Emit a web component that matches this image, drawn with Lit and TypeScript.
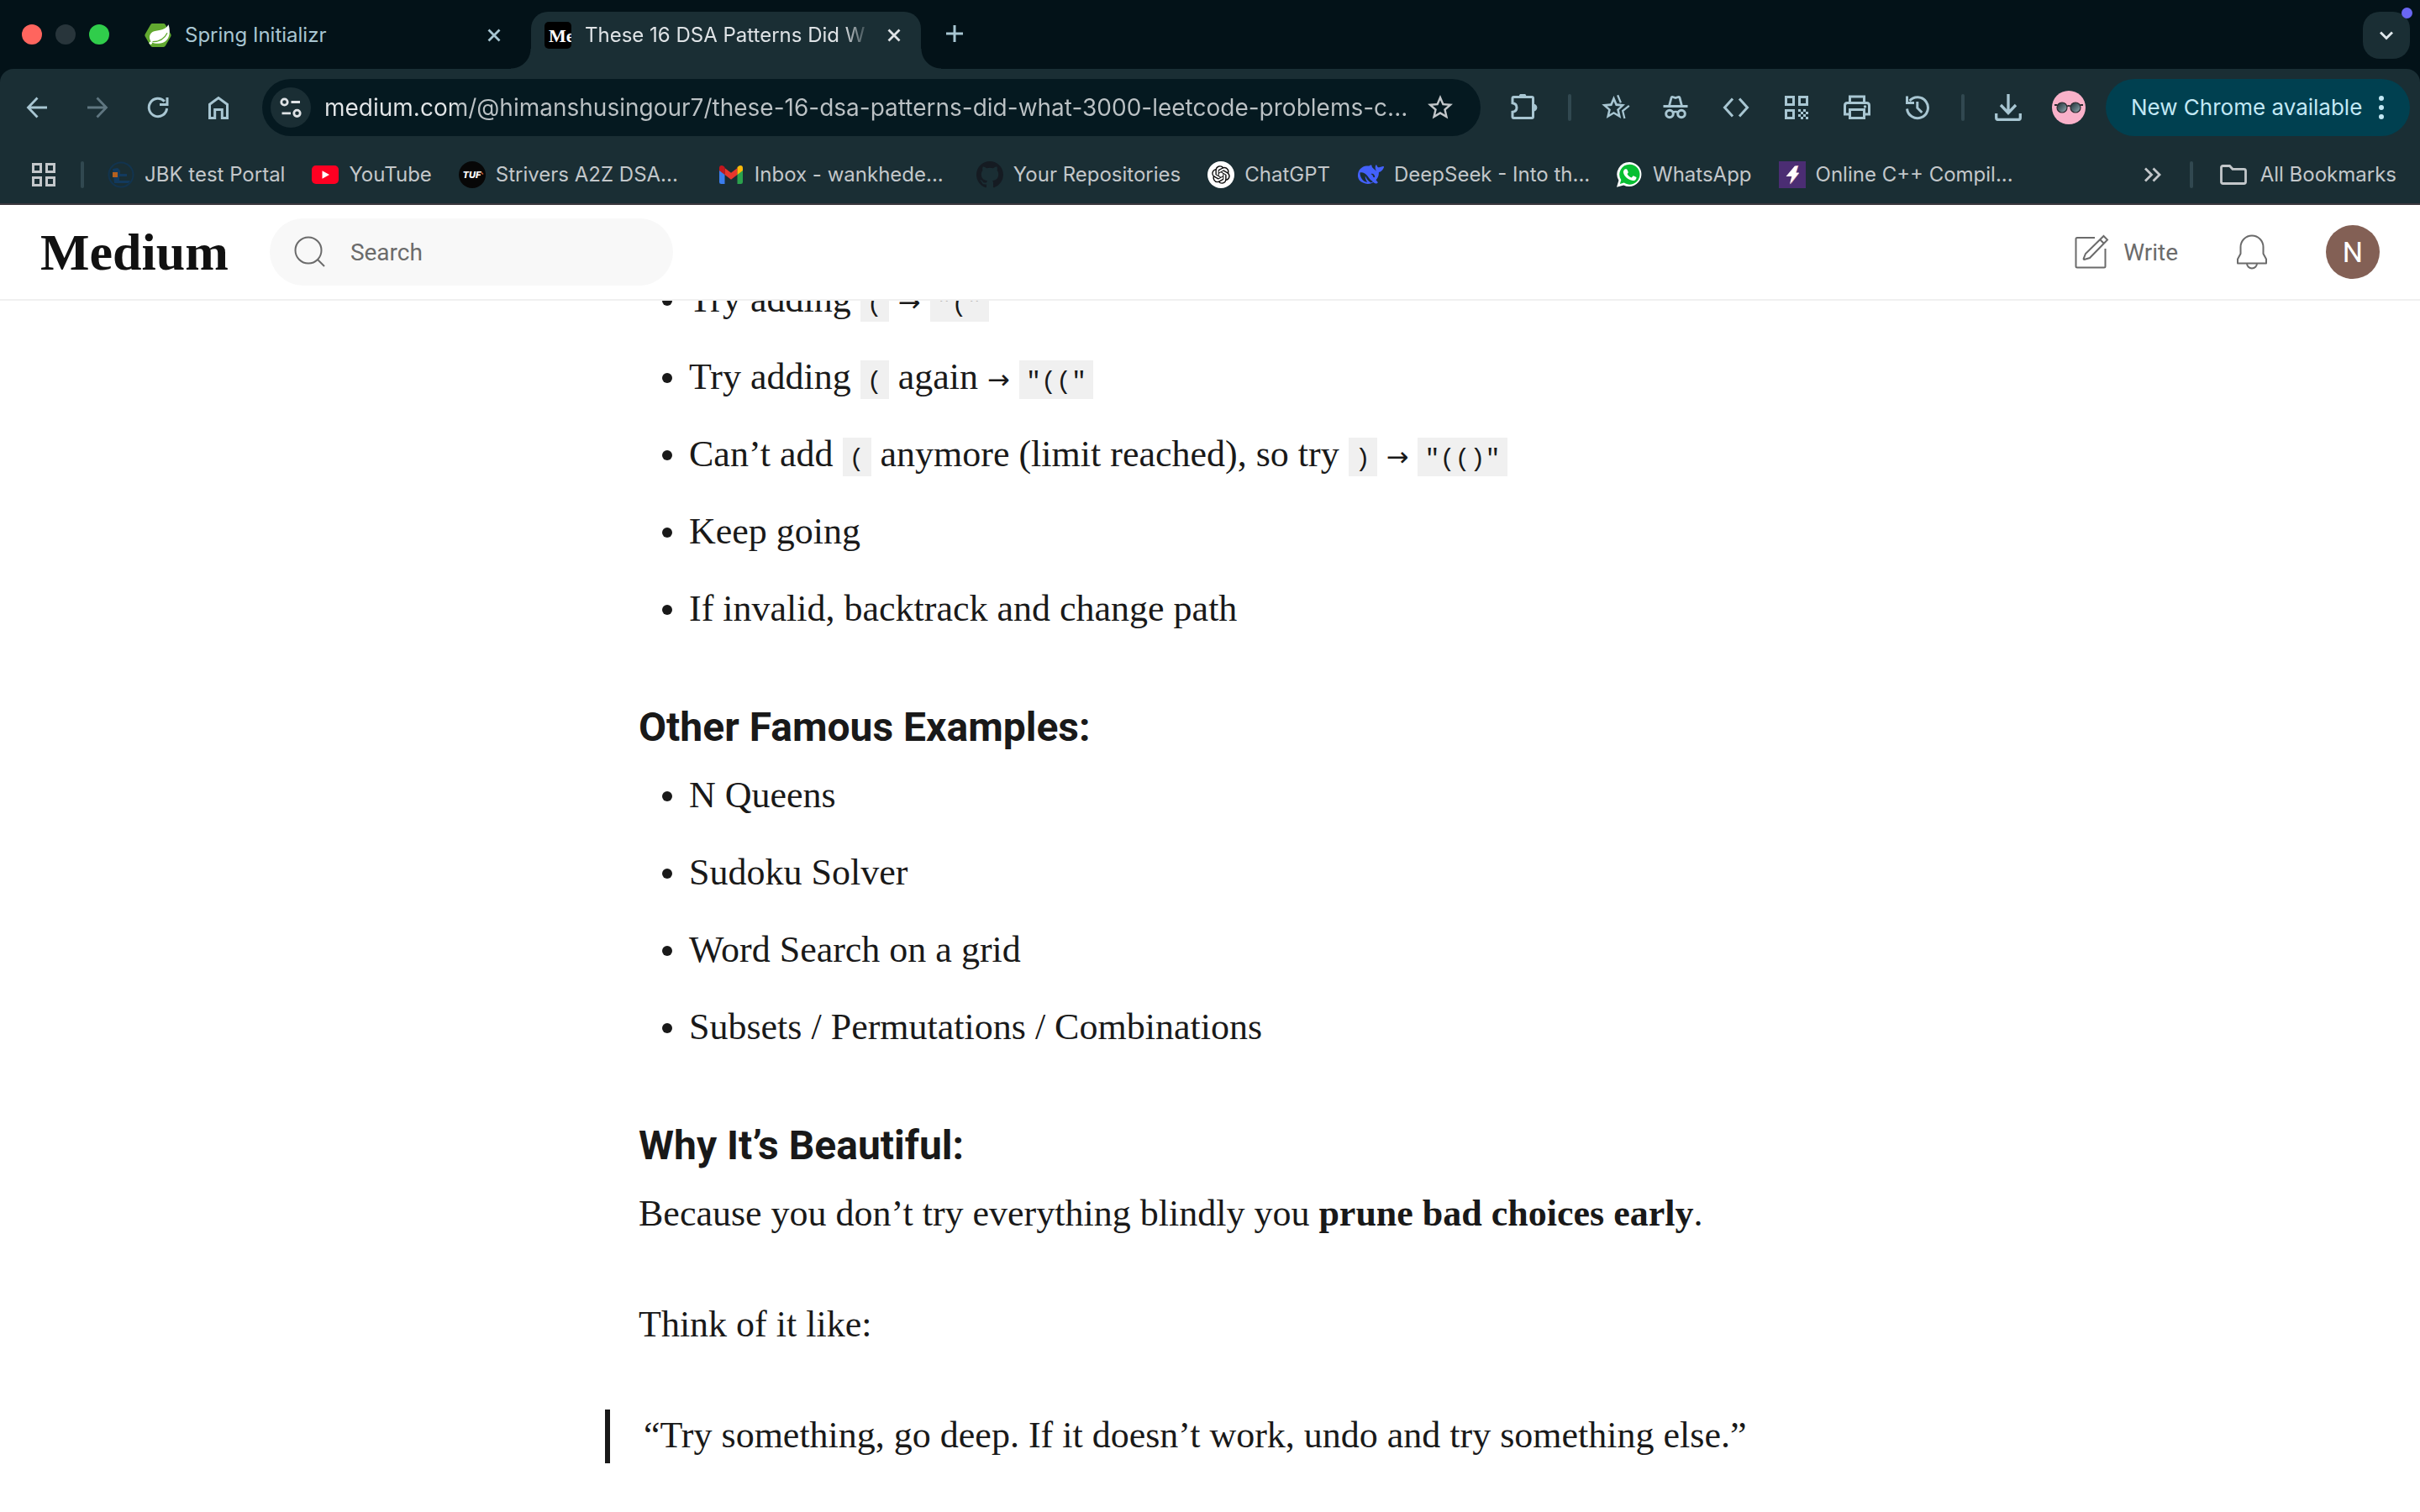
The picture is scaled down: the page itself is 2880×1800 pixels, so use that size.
import { LitElement, html, svg, css } from "lit";
import type { TemplateResult } from "lit";
import { customElement } from "lit/decorators.js";
import { classMap } from "lit/directives/class-map.js";

/* ---------- icons ---------- */

const icon = (size: number, body: TemplateResult, view = 32) => html`
  <svg class="icon" width=${size} height=${size} viewBox="0 0 ${view} ${view}" aria-hidden="true">${body}</svg>
`;

const line = (d: string, w = 3) =>
  svg`<path d=${d} fill="none" stroke="currentColor" stroke-width=${w} />`;

const closeIcon = icon(16, line("M1.5 1.5 14.5 14.5M14.5 1.5 1.5 14.5", 2.8), 16);
const plusIcon = icon(20, line("M10 0V20M0 10H20", 3), 20);
const chevronDown = icon(16, line("M1 4.5 8 11.5 15 4.5", 3), 16);

const backIcon = icon(32, line("M28 16H6M16.5 4.5 5.5 16l11 11.5", 2.8));
const forwardIcon = icon(32, line("M4 16H26M15.5 4.5 26.5 16l-11 11.5", 2.8));
const reloadIcon = icon(32, line("M26.6 17A10.7 10.7 0 1 1 23.8 8.7M27 4V12.5H18", 3));
const homeIcon = icon(32, line("M5.5 28.5V12.2L16 4.5 26.5 12.2v16.3h-6.2V18.5h-8.6v10z", 3));
const tuneIcon = icon(
  32,
  svg`<circle cx="8.5" cy="9.5" r="3.7" fill="none" stroke="currentColor" stroke-width="2.8" />
    <circle cx="23.5" cy="22.8" r="3.7" fill="none" stroke="currentColor" stroke-width="2.8" />
    ${line("M16.5 9.5H27M5.5 22.8H16", 2.8)}`,
);
const starIcon = icon(
  36,
  svg`<path fill="currentColor" d="M22 9.24l-7.19-.62L12 2 9.19 8.63 2 9.24l5.46 4.73L5.82 21 12 17.27 18.18 21l-1.63-7.03L22 9.24zM12 15.4l-3.76 2.27 1-4.28-3.32-2.88 4.38-.38L12 6.1l1.71 4.04 4.38.38-3.32 2.88 1 4.28L12 15.4z" />`,
  24,
);
const puzzleIcon = icon(
  32,
  svg`${line("M3.5 3.5H25q1.5 0 1.5 1.5V27q0 1.5-1.5 1.5H3.5q-1.5 0-1.5-1.5V21.3c3-.4 5-2.6 5-5.3s-2-4.9-5-5.3V5q0-1.5 1.5-1.5z", 3)}
    <path fill="currentColor" d="M9.8 3a4.3 4.3 0 0 1 8.6 0zM27 11.7a4.4 4.4 0 0 1 0 8.8z" />`,
);
const sparkStarIcon = icon(
  36,
  svg`<path fill="currentColor" d="M20 9.5l-6.4-.6L11 2.6 8.4 8.9 1.5 9.5 6.7 14 5.2 20.7 11 17.2 16.8 20.7 15.3 14zM11 15.3l-3.3 2 .9-3.8-2.9-2.5 3.8-.3L11 7.1l1.5 3.6 3.8.3-2.9 2.5.9 3.8z" />
    <path fill="none" stroke="currentColor" stroke-width="1.5" d="M14.1 2.2 16.6 8.2M23.2 10.6 18.1 14.7 19.6 20.7" />`,
  24,
);
const incognitoIcon = icon(
  32,
  svg`${line("M1.5 14.5H30.5", 3)}
    ${line("M8.5 14 11 4.5q.4-1.4 1.8-1l3.2 1 3.2-1q1.4-.4 1.8 1L23.5 14", 2.8)}
    <circle cx="9" cy="23.5" r="4.3" fill="none" stroke="currentColor" stroke-width="3" />
    <circle cx="23" cy="23.5" r="4.3" fill="none" stroke="currentColor" stroke-width="3" />
    ${line("M12.5 22q3.5-2 7 0", 2.6)}`,
);
const codeIcon = icon(32, line("M12 5.5 2.5 16 12 26.5M20 5.5 29.5 16 20 26.5", 3));
const qrIcon = icon(
  32,
  svg`${line("M3.5 3.5h9v9h-9zM19.5 3.5h9v9h-9zM3.5 19.5h9v9h-9z", 3)}
    <path fill="currentColor" d="M18 18h3v3h-3zM24 18h3v3h-3zM21 21h3v3h-3zM27 21h3v3h-3zM18 24h3v3h-3zM24 24h3v3h-3zM21 27h3v3h-3zM27 27h3v3h-3z" />`,
);
const printIcon = icon(
  32,
  svg`${line("M7.5 10V3h17v7M7.5 24H1.5V13.5q0-3 3-3h23q3 0 3 3V24h-6M7.5 18.5h17v10h-17z", 3)}
    <circle cx="25.5" cy="15" r="1.7" fill="currentColor" />`,
);
const historyIcon = icon(32, line("M3.5 17.5A12.5 12.5 0 1 0 6.5 8M3.5 2.5V10.5H12M15.8 9v7.5l5.5 5.5", 3));
const downloadIcon = icon(32, line("M16 0V22M7 13l9 9.5 9-9.5M1.7 23v5q0 2.5 2.5 2.5h23.6q2.5 0 2.5-2.5v-5", 3.3));
const shadesIcon = icon(
  40,
  svg`<defs>
      <linearGradient id="lens" x1="0" y1="0" x2="1" y2="1">
        <stop offset="0" stop-color="#1d2a30" /><stop offset="0.6" stop-color="#61777f" /><stop offset="1" stop-color="#a3b5b9" />
      </linearGradient>
    </defs>
    <circle cx="20" cy="20" r="20" fill="#f9b1c9" />
    <circle cx="12" cy="20" r="6" fill="url(#lens)" stroke="#2b2b30" stroke-width="1.2" />
    <circle cx="28" cy="20" r="6" fill="url(#lens)" stroke="#2b2b30" stroke-width="1.2" />
    <path d="M3 17h3.5M33.5 17H37M18 18.5q2-1.2 4 0" fill="none" stroke="#2b2b30" stroke-width="1.8" />`,
  40,
);
const dotsIcon = icon(
  32,
  svg`<circle cx="16" cy="5" r="3" fill="currentColor" /><circle cx="16" cy="16" r="3" fill="currentColor" /><circle cx="16" cy="27" r="3" fill="currentColor" />`,
);
const appsIcon = icon(32, line("M3.5 3.5h9v9h-9zM19.5 3.5h9v9h-9zM3.5 19.5h9v9h-9zM19.5 19.5h9v9h-9z", 3));
const moreIcon = icon(32, line("M7 8.5 14.5 16 7 23.5M16.5 8.5 24 16l-7.5 7.5", 2.8));
const folderIcon = icon(32, line("M3.5 5.5H11.5L15 9.3H28.5q2 0 2 2V24.5q0 2-2 2H3.5q-2 0-2-2v-17q0-2 2-2z", 2.8));

/* ---------- favicons ---------- */

const springLogo = icon(
  32,
  svg`<path fill="#62a930" d="M9.5 2h13q1.6 0 2.4 1.4l6.3 11q.9 1.6 0 3.2l-6.3 11q-.8 1.4-2.4 1.4h-13q-1.6 0-2.4-1.4l-6.3-11q-.9-1.6 0-3.2l6.3-11Q7.9 2 9.5 2z" />
    <path fill="#fff" d="M28.5 3.2c3 8.5 1.7 22-11.5 22.5-3.5.2-6-.3-8.5-1.2C5 20.5 5 15 9.5 12c4.5-2.8 14.5-.5 19-8.8z" />
    <circle cx="7.3" cy="25.3" r="1.7" fill="#fff" />
    <path d="M9.5 23.7c8.5-.2 14.5-4 17.5-10.5" fill="none" stroke="#62a930" stroke-width="1.3" />`,
);
const mediumFavicon = icon(
  32,
  svg`<rect width="32" height="32" rx="5" fill="#000" />
    <text x="5" y="24" font-family="Liberation Serif, serif" font-weight="700" font-size="22" fill="#fff">Me</text>`,
);
const jbkLogo = icon(
  32,
  svg`<circle cx="16" cy="16" r="14.5" fill="none" stroke="#12344f" stroke-width="2" />
    <path fill="#123a5e" d="M6 9l6-1 3 3v4h8v3H14v5h13l-2 3H8z" />
    <rect x="6" y="13" width="6" height="6" fill="#b5611f" />`,
);
const youtubeLogo = icon(
  32,
  svg`<rect y="5" width="32" height="22" rx="5" fill="#ff0022" /><path fill="#fff" d="M12.5 11.2 21 16l-8.5 4.8z" />`,
);
const tufLogo = icon(
  32,
  svg`<circle cx="16" cy="16" r="16" fill="#070707" />
    <text x="15.5" y="20" text-anchor="middle" font-family="Inter, sans-serif" font-weight="800" font-style="italic" font-size="11" fill="#fff">TUF</text>
    <path d="M27 13.5l2 2" stroke="#d4582a" stroke-width="1.5" />`,
);
const gmailLogo = icon(
  32,
  svg`<path fill="#3b7ded" d="M2 10.5v14.2Q2 27 4.3 27H8.5V15z" />
    <path fill="#2ba24c" d="M30 10.5v14.2q0 2.3-2.3 2.3H23.5V15z" />
    <path fill="#e8362c" d="M8.5 8 16 13.8 23.5 8v8L16 21.8 8.5 16z" />
    <path fill="#c5161d" d="M2 8.3Q2 5 4.8 5q1.4 0 2.5.9L8.5 7v9L2 11z" />
    <path fill="#fbba0a" d="M30 8.3Q30 5 27.2 5q-1.4 0-2.5.9L23.5 7v9L30 11z" />`,
);
const githubLogo = icon(
  32,
  svg`<path fill="#151b22" d="M8 0C3.58 0 0 3.58 0 8c0 3.54 2.29 6.53 5.47 7.59.4.07.55-.17.55-.38 0-.19-.01-.82-.01-1.49-2.01.37-2.53-.49-2.69-.94-.09-.23-.48-.94-.82-1.13-.28-.15-.68-.52-.01-.53.63-.01 1.08.58 1.23.82.72 1.21 1.87.87 2.33.66.07-.52.28-.87.51-1.07-1.78-.2-3.64-.89-3.64-3.95 0-.87.31-1.59.82-2.15-.08-.2-.36-1.02.08-2.12 0 0 .67-.21 2.2.82.64-.18 1.32-.27 2-.27.68 0 1.36.09 2 .27 1.53-1.04 2.2-.82 2.2-.82.44 1.1.16 1.92.08 2.12.51.56.82 1.27.82 2.15 0 3.07-1.87 3.75-3.65 3.95.29.25.54.73.54 1.48 0 1.07-.01 1.93-.01 2.2 0 .21.15.46.55.38A8.013 8.013 0 0016 8c0-4.42-3.58-8-8-8z" />`,
  16,
);
const chatgptLogo = icon(
  32,
  svg`<circle cx="16" cy="16" r="16" fill="#fff" />
    <g transform="translate(5.2 5.2) scale(0.9)"><path fill="#0d0d0d" d="M22.2819 9.8211a5.9847 5.9847 0 0 0-.5157-4.9108 6.0462 6.0462 0 0 0-6.5098-2.9A6.0651 6.0651 0 0 0 4.9807 4.1818a5.9847 5.9847 0 0 0-3.9977 2.9 6.0462 6.0462 0 0 0 .7427 7.0966 5.98 5.98 0 0 0 .511 4.9107 6.051 6.051 0 0 0 6.5146 2.9001A5.9847 5.9847 0 0 0 13.2599 24a6.0557 6.0557 0 0 0 5.7718-4.2058 5.9894 5.9894 0 0 0 3.9977-2.9001 6.0557 6.0557 0 0 0-.7475-7.0729zm-9.022 12.6081a4.4755 4.4755 0 0 1-2.8764-1.0408l.1419-.0804 4.7783-2.7582a.7948.7948 0 0 0 .3927-.6813v-6.7369l2.02 1.1686a.071.071 0 0 1 .038.0615v5.5826a4.504 4.504 0 0 1-4.4945 4.4944zm-9.6607-4.1254a4.4708 4.4708 0 0 1-.5346-3.0137l.142.0852 4.783 2.7582a.7712.7712 0 0 0 .7806 0l5.8428-3.3685v2.3324a.0804.0804 0 0 1-.0332.0615L9.74 19.9502a4.4992 4.4992 0 0 1-6.1408-1.6464zM2.3408 7.8956a4.485 4.485 0 0 1 2.3655-1.9728V11.6a.7664.7664 0 0 0 .3879.6765l5.8144 3.3543-2.0201 1.1685a.0757.0757 0 0 1-.071 0l-4.8303-2.7865A4.504 4.504 0 0 1 2.3408 7.872zm16.5963 3.8558L13.1038 8.364 15.1192 7.2a.0757.0757 0 0 1 .071 0l4.8303 2.7913a4.4944 4.4944 0 0 1-.6765 8.1042v-5.6772a.79.79 0 0 0-.407-.667zm2.0107-3.0231l-.142-.0852-4.7735-2.7818a.7759.7759 0 0 0-.7854 0L9.409 9.2297V6.8974a.0662.0662 0 0 1 .0284-.0615l4.8303-2.7866a4.4992 4.4992 0 0 1 6.6802 4.66zM8.3065 12.863l-2.02-1.1638a.0804.0804 0 0 1-.038-.0567V6.0742a4.4992 4.4992 0 0 1 7.3757-3.4537l-.142.0805L8.704 5.459a.7948.7948 0 0 0-.3927.6813zm1.0976-2.3654l2.602-1.4998 2.6069 1.4998v2.9994l-2.5974 1.4997-2.6067-1.4997Z" /></g>`,
);
const deepseekLogo = icon(
  32,
  svg`<path fill="#4361fc" d="M1 18C.5 11 5 6 11.5 5.5c2 0 2.6.4 4-.7 1-.7 2.3-.3 2.1.6-.3 1.6 1 2.600 2.9 4.1l2.500 2.300c-.9-2.400-1.900-3.600-.9-6.800.4-1.100 1.300-.7 1.600.2.6 1.900 1.600 2.300 3.300 1.800 2-.1 2.600-1.200 4.400-.9.8.1.8.9.2 1.900-1 2.400-3.200 4.600-5.700 5 .2 3.700-1.100 6.700-3.400 9.300l2 2.400c.5.9-.2 1.500-1.400 1.700-1.400.3-2.500-.2-3.700-1.300-3.300 2.200-8.300 2.600-12.300.5C3.400 23.900 1.300 21.300 1 18z" />
    <path fill="#1a2e34" d="M3.5 13.5c3.5-.7 7 1.500 9.300 4.600 2 2.700 3.700 5 6.200 6.200l-2.500 1.200c-3.700-2-5.500-5.300-6.700-8-.3 2.700.8 5 2.500 7.500-5.500-.5-9-6.300-8.800-11.500zM16.500 15.200c2-1.400 4.800.6 4.700 3.600-.8.8-2 .4-2.200-.7-.3-1.600-1-2.300-2.500-2.900z" />`,
);
const whatsappLogo = icon(
  32,
  svg`<path fill="#fff" d="M16.5 1A14.5 14.5 0 1 1 9.3 28.4L1 30.8l2.4-8A14.5 14.5 0 0 1 16.5 1z" />
    <path fill="#08bf33" d="M16.5 3.7A12 12 0 1 1 9.7 25.6L4.800 27l1.500-4.700A12 12 0 0 1 16.5 3.7z" />
    <path fill="#fff" d="M11.2 9.2h1.3c.5 0 .8.2 1 .7l1.200 2.800c.2.5 0 .9-1.200 2.200 1.100 2.200 2.900 3.700 5.100 4.700l1.700-1.900c.3-.4.6-.4 1-.2l2.700 1.300c.4.2.6.4.5.9-.2 2.100-2.200 3.600-4.300 3.400-5.700-.9-10.700-5.500-11.300-10.100 0-1.700.9-3.300 2.300-3.800z" />`,
);
const boltLogo = icon(
  32,
  svg`<rect width="32" height="32" fill="#4b2d73" />
    <path fill="#f3a6a0" d="M20.5 5.5 23.5 5l-2.8 9h3.7L14 27.5z" />
    <path fill="#fff" d="M19 5.5h3.5L20 13.5h4L12.8 27.5l2.5-9.5H8.5z" />`,
);

/* ---------- browser frame ---------- */

interface Bookmark {
  title: string;
  logo: TemplateResult;
  wide?: boolean;
}

const bookmarks: Bookmark[] = [
  { title: "JBK test Portal", logo: jbkLogo },
  { title: "YouTube", logo: youtubeLogo },
  { title: "Strivers A2Z DSA...", logo: tufLogo, wide: true },
  { title: "Inbox - wankhede...", logo: gmailLogo, wide: true },
  { title: "Your Repositories", logo: githubLogo },
  { title: "ChatGPT", logo: chatgptLogo },
  { title: "DeepSeek - Into th...", logo: deepseekLogo, wide: true },
  { title: "WhatsApp", logo: whatsappLogo },
  { title: "Online C++ Compil...", logo: boltLogo },
];

const navButtons = [
  { label: "Back", glyph: backIcon },
  { label: "Forward", glyph: forwardIcon, off: true },
  { label: "Reload", glyph: reloadIcon },
  { label: "Home", glyph: homeIcon },
];

const toolButtons = [
  { label: "Bookmark actions", glyph: sparkStarIcon },
  { label: "Incognito window", glyph: incognitoIcon },
  { label: "Developer tools", glyph: codeIcon },
  { label: "QR code", glyph: qrIcon },
  { label: "Print", glyph: printIcon },
  { label: "History", glyph: historyIcon },
];

const resets = css`
  * {
    box-sizing: border-box;
  }
  button {
    margin: 0;
    padding: 0;
    border: 0;
    background: none;
    color: inherit;
    font: inherit;
    cursor: pointer;
  }
  a {
    color: inherit;
    text-decoration: none;
  }
  .icon {
    display: block;
    flex: none;
  }
`;

@customElement("browser-frame")
class BrowserFrame extends LitElement {
  static styles = [
    resets,
    css`
      :host {
        display: block;
        background: #031218;
        color: #c3c7ca;
        font-family: Inter, "Liberation Sans", sans-serif;
        font-size: 24px;
        line-height: 32px;
      }
      .strip {
        display: flex;
        align-items: flex-end;
        height: 82px;
        padding: 0 12px 0 26px;
      }
      .lights {
        display: flex;
        align-items: center;
        align-self: stretch;
        gap: 16px;
        margin-right: 26px;
      }
      .light {
        width: 24px;
        height: 24px;
        border-radius: 50%;
        background: #28353b;
      }
      .light.close {
        background: #ff655e;
      }
      .light.zoom {
        background: #30cd4b;
      }
      .tab {
        position: relative;
        display: flex;
        align-items: center;
        gap: 16px;
        flex: 0 1 464px;
        min-width: 0;
        height: 68px;
        padding: 0 24px 12px 16px;
        color: #a8c6d2;
      }
      .tab + .tab {
        margin-left: 12px;
      }
      .tab.active {
        background: #1a2e34;
        border-radius: 20px 20px 0 0;
        color: #dfe3e6;
      }
      .tab.active::before,
      .tab.active::after {
        content: "";
        position: absolute;
        bottom: 0;
        width: 24px;
        height: 24px;
      }
      .tab.active::before {
        right: 100%;
        background: radial-gradient(circle at 0 0, transparent 23px, #1a2e34 24px);
      }
      .tab.active::after {
        left: 100%;
        background: radial-gradient(circle at 100% 0, transparent 23px, #1a2e34 24px);
      }
      .name {
        flex: 1;
        min-width: 0;
        overflow: hidden;
        white-space: nowrap;
      }
      .active .name {
        -webkit-mask-image: linear-gradient(to left, transparent 4px, #000 36px);
        mask-image: linear-gradient(to left, transparent 4px, #000 36px);
      }
      .add {
        display: grid;
        place-items: center;
        width: 40px;
        height: 40px;
        margin: 0 auto 22px 20px;
        color: #a8c6d2;
      }
      .search-tabs {
        position: relative;
        display: grid;
        place-items: center;
        width: 56px;
        height: 56px;
        margin-bottom: 12px;
        border-radius: 20px;
        background: #1a2e34;
        color: #dfe8ec;
      }
      .badge {
        position: absolute;
        top: -5px;
        right: -3px;
        width: 13px;
        height: 13px;
        border-radius: 50%;
        background: #6a66f2;
      }
      .bars {
        background: #1a2e34;
        border-radius: 16px 16px 0 0;
        border-bottom: 2px solid #3b383d;
      }
      .toolbar {
        display: flex;
        align-items: center;
        padding: 12px 12px 12px 8px;
        color: #a8c6d2;
      }
      .tool {
        display: grid;
        place-items: center;
        width: 72px;
        height: 56px;
      }
      .tool.off {
        color: #5f7680;
      }
      .rule {
        flex: none;
        width: 4px;
        height: 32px;
        margin: 0 16px;
        border-radius: 2px;
        background: #314850;
      }
      .address {
        display: flex;
        align-items: center;
        flex: 1;
        height: 68px;
        margin: 0 16px;
        padding: 0 30px 0 10px;
        border-radius: 34px;
        background: #051920;
        color: #c3c7ca;
      }
      .site {
        display: grid;
        place-items: center;
        width: 48px;
        height: 48px;
        margin-right: 16px;
        border-radius: 50%;
        background: #1a2e34;
        color: #dfe3e6;
      }
      .url {
        flex: 1;
        min-width: 0;
        height: 48px;
        padding: 0;
        border: 0;
        outline: 0;
        background: linear-gradient(to right, #e3e6e8 158px, #bcc2c5 158px) text;
        color: transparent;
        font: inherit;
        font-size: 28px;
      }
      .update {
        display: flex;
        align-items: center;
        justify-content: space-between;
        min-width: 362px;
        height: 68px;
        margin-left: 8px;
        padding: 0 18px 0 30px;
        border-radius: 34px;
        background: #004050;
        color: #c2e8f5;
        font-size: 26px;
      }
      .bookmarks {
        display: flex;
        align-items: center;
        height: 68px;
        padding: 0 28px 0 36px;
      }
      .bookmarks .rule {
        margin: 0 28px;
      }
      .marks {
        display: flex;
        align-items: center;
        flex: 1;
        min-width: 0;
        gap: 32px;
      }
      .mark {
        display: flex;
        align-items: center;
        gap: 12px;
        white-space: nowrap;
      }
      .mark.wide {
        width: 276px;
      }
      .folder {
        display: flex;
        align-items: center;
        gap: 16px;
        margin-left: 4px;
      }
    `,
  ];

  render() {
    return html`
      <div class="strip">
        <div class="lights">
          <span class="light close"></span><span class="light"></span><span class="light zoom"></span>
        </div>
        <div class="tab">
          ${springLogo}<span class="name">Spring Initializr</span>
          <button aria-label="Close tab">${closeIcon}</button>
        </div>
        <div class="tab active">
          ${mediumFavicon}<span class="name">These 16 DSA Patterns Did W</span>
          <button aria-label="Close tab">${closeIcon}</button>
        </div>
        <button class="add" aria-label="New tab">${plusIcon}</button>
        <button class="search-tabs" aria-label="Search tabs">${chevronDown}<span class="badge"></span></button>
      </div>
      <div class="bars">
        <div class="toolbar">
          ${navButtons.map(
            (b) => html`<button class=${classMap({ tool: true, off: !!b.off })} aria-label=${b.label}>${b.glyph}</button>`,
          )}
          <div class="address">
            <button class="site" aria-label="Site information">${tuneIcon}</button>
            <input
              class="url"
              type="text"
              aria-label="Address"
              spellcheck="false"
              value="medium.com/@himanshusingour7/these-16-dsa-patterns-did-what-3000-leetcode-problems-c..."
            />
            <button aria-label="Bookmark this page">${starIcon}</button>
          </div>
          <button class="tool" aria-label="Extensions">${puzzleIcon}</button>
          <span class="rule"></span>
          ${toolButtons.map((b) => html`<button class="tool" aria-label=${b.label}>${b.glyph}</button>`)}
          <span class="rule"></span>
          <button class="tool" aria-label="Downloads">${downloadIcon}</button>
          <button class="tool" aria-label="Profile">${shadesIcon}</button>
          <button class="update"><span>New Chrome available</span>${dotsIcon}</button>
        </div>
        <div class="bookmarks">
          <button aria-label="Apps">${appsIcon}</button>
          <span class="rule"></span>
          <nav class="marks">
            ${bookmarks.map(
              (b) => html`<a class=${classMap({ mark: true, wide: !!b.wide })} href="#">${b.logo}<span>${b.title}</span></a>`,
            )}
          </nav>
          <button aria-label="More bookmarks">${moreIcon}</button>
          <span class="rule"></span>
          <button class="folder">${folderIcon}<span>All Bookmarks</span></button>
        </div>
      </div>
    `;
  }
}

/* ---------- site header ---------- */

@customElement("site-header")
class SiteHeader extends LitElement {
  static styles = [
    resets,
    css`
      :host {
        display: block;
        position: relative;
        z-index: 1;
        background: #fff;
        border-bottom: 2px solid #f0f0f0;
        color: #6b6b6b;
        font-family: Roboto, "Liberation Sans", sans-serif;
        font-size: 28px;
      }
      .row {
        display: flex;
        align-items: center;
        height: 112px;
        padding: 0 48px;
      }
      .logo {
        color: #111;
        font: 700 62px/72px "Liberation Serif", serif;
      }
      .search {
        display: flex;
        align-items: center;
        gap: 28px;
        width: 480px;
        height: 80px;
        margin: 0 auto 0 49px;
        padding: 0 28px;
        border-radius: 40px;
        background: #f8f8f8;
      }
      .field {
        flex: 1;
        min-width: 0;
        padding: 0;
        border: 0;
        outline: 0;
        background: none;
        font: inherit;
        color: #242424;
      }
      .field::placeholder {
        color: #6b6b6b;
        opacity: 1;
      }
      .write {
        display: flex;
        align-items: center;
        gap: 14px;
      }
      .bell {
        margin: 0 64px;
      }
      .avatar {
        width: 64px;
        height: 64px;
        border-radius: 50%;
        background: #836055;
        color: #fff;
        font-size: 34px;
      }
    `,
  ];

  render() {
    return html`
      <header class="row">
        <a class="logo" href="#">Medium</a>
        <label class="search">
          ${icon(
            40,
            svg`<circle cx="18" cy="18" r="15.5" fill="none" stroke="currentColor" stroke-width="2" />
              <path d="M29 29l8 8" stroke="currentColor" stroke-width="2" />`,
            40,
          )}
          <input class="field" type="text" placeholder="Search" aria-label="Search" />
        </label>
        <a class="write" href="#">
          ${icon(
            48,
            svg`<path fill="none" stroke="currentColor" stroke-width="2" d="M28 7H7q-1.5 0-1.5 1.5V41q0 1.5 1.5 1.5H39q1.5 0 1.5-1.5V20" />
              <path fill="none" stroke="currentColor" stroke-width="2" d="M38.5 5 43 9.5 22 31l-6.500 2q-1 0-.8-1.200L17 26zM34.5 9.5l4.500 4.500" />`,
            48,
          )}
          <span>Write</span>
        </a>
        <button class="bell" aria-label="Notifications">
          ${icon(
            48,
            svg`<path fill="none" stroke="currentColor" stroke-width="2" stroke-linejoin="round" d="M7 37.5v-5l3.5-6.5V18a13.5 13.5 0 0 1 27 0v8l3.5 6.5v5zM18 37.5a6 6 0 0 0 12 0" />`,
            48,
          )}
        </button>
        <button class="avatar">N</button>
      </header>
    `;
  }
}

/* ---------- article ---------- */

const arrow = html`<span class="arrow">→</span>`;
const code = (s: string) => html`<code>${s}</code>`;

@customElement("story-body")
class StoryBody extends LitElement {
  static styles = [
    resets,
    css`
      :host {
        display: block;
        overflow: hidden;
      }
      /* the story is scrolled so that its first line passes under the header */
      .story {
        max-width: 1360px;
        margin: -32px auto 0;
        padding-bottom: 58px;
        color: #191919;
        font: 44px/62px "Liberation Serif", serif;
      }
      h2 {
        margin: 80px 0 20px;
        font: 700 48px/60px Roboto, "Liberation Sans", sans-serif;
      }
      ul {
        display: flex;
        flex-direction: column;
        gap: 30px;
        margin: 0;
        padding: 0 0 0 28px;
        list-style: none;
      }
      li {
        display: flex;
        align-items: center;
        gap: 20px;
      }
      li::before {
        content: "";
        flex: none;
        width: 12px;
        height: 12px;
        margin-top: 2px;
        border-radius: 50%;
        background: #191919;
      }
      code {
        padding: 9px 8px 3px;
        background: #f0f0f0;
        font: 30px/30px "Liberation Mono", monospace;
      }
      .arrow {
        font: 32px/32px "DejaVu Sans", sans-serif;
      }
      p {
        margin: 0;
      }
      p + p {
        margin-top: 70px;
      }
      blockquote {
        margin: 70px 0 0 -40px;
        padding: 0 0 2px 40px;
        border-left: 6px solid #191919;
      }
    `,
  ];

  private items(rows: unknown[]) {
    return html`<ul>
      ${rows.map((r) => html`<li><span>${r}</span></li>`)}
    </ul>`;
  }

  render() {
    return html`
      <article class="story">
        ${this.items([
          html`Try adding ${code("(")} ${arrow} ${code('"("')}`,
          html`Try adding ${code("(")} again ${arrow} ${code('"(("')}`,
          html`Can’t add ${code("(")} anymore (limit reached), so try ${code(")")} ${arrow} ${code('"(()"')}`,
          "Keep going",
          "If invalid, backtrack and change path",
        ])}
        <h2>Other Famous Examples:</h2>
        ${this.items(["N Queens", "Sudoku Solver", "Word Search on a grid", "Subsets / Permutations / Combinations"])}
        <h2>Why It’s Beautiful:</h2>
        <p>Because you don’t try everything blindly you <b>prune bad choices early</b>.</p>
        <p>Think of it like:</p>
        <blockquote>“Try something, go deep. If it doesn’t work, undo and try something else.”</blockquote>
      </article>
    `;
  }
}

@customElement("app-root")
class AppRoot extends LitElement {
  static styles = css`
    :host {
      display: block;
      min-height: 100vh;
      background: #fff;
    }
  `;

  render() {
    return html`
      <browser-frame></browser-frame>
      <site-header></site-header>
      <story-body></story-body>
    `;
  }
}
